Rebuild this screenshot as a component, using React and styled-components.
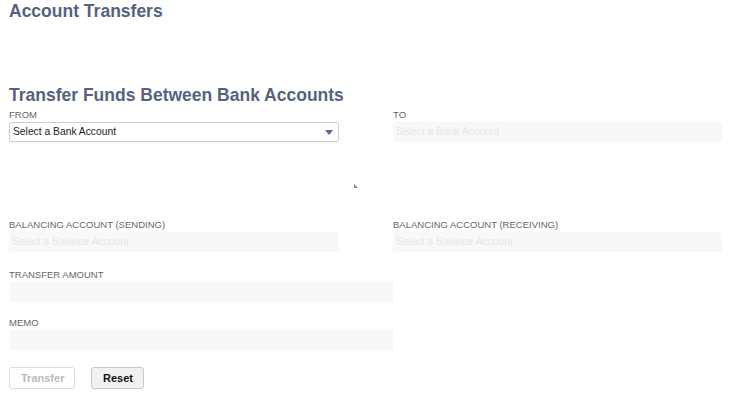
import React from 'react';
import styled, { createGlobalStyle } from 'styled-components';

const GlobalStyle = createGlobalStyle`
  html, body {
    margin: 0;
    padding: 0;
    background: #ffffff;
  }
  body {
    font-family: "Liberation Sans", Arial, sans-serif;
  }
`;

const Page = styled.div`
  position: relative;
  width: 733px;
  height: 401px;
  padding: 1px 9px 0;
  box-sizing: border-box;
  overflow: hidden;
`;

const PageTitle = styled.h1`
  margin: 0;
  font-size: 17.5px;
  line-height: 20px;
  font-weight: bold;
  color: #56627f;
`;

const SectionTitle = styled.h2`
  margin: 64px 0 4px;
  font-size: 17.5px;
  line-height: 20px;
  font-weight: bold;
  color: #56627f;
`;

const Row = styled.div`
  display: grid;
  grid-template-columns: ${(p) => (p.$wide ? '384px' : '330px 329px')};
  column-gap: 54px;
  margin-bottom: ${(p) => p.$after || 17}px;
`;

const Field = styled.div`
  display: flex;
  flex-direction: column;
`;

const Label = styled.label`
  font-size: 9.5px;
  line-height: 11px;
  color: #666666;
  margin-bottom: 2px;
  white-space: nowrap;
`;

const SelectBox = styled.div`
  position: relative;
  height: 20px;
  box-sizing: border-box;
  border: 1px solid #cfcfcf;
  border-radius: 2px;
  background: #ffffff;
  box-shadow: 0 1px 1px rgba(0, 0, 0, 0.04);
  font-size: 10.3px;
  line-height: 18px;
  padding-left: 3px;
  color: #222222;
`;

const Arrow = styled.span`
  position: absolute;
  right: 5px;
  top: 7px;
  width: 0;
  height: 0;
  border-left: 4px solid transparent;
  border-right: 4px solid transparent;
  border-top: 5px solid #5b6a8f;
`;

const Disabled = styled.div`
  height: 20px;
  box-sizing: border-box;
  border-radius: 2px;
  background: #f8f8f8;
  font-size: 10.3px;
  line-height: 20px;
  padding-left: 3px;
  color: #e6e6e6;
  white-space: nowrap;
`;

const Buttons = styled.div`
  display: flex;
  gap: 16px;
`;

const Button = styled.button`
  height: 22px;
  box-sizing: border-box;
  padding: 0 11px;
  border-radius: 3px;
  font-family: "Liberation Sans", Arial, sans-serif;
  font-size: 11px;
  font-weight: bold;
  border: 1px solid ${(p) => (p.disabled ? '#dddddd' : '#c8c8c8')};
  background: ${(p) => (p.disabled ? '#ffffff' : '#f1f1f1')};
  color: ${(p) => (p.disabled ? '#bbbbbb' : '#111111')};
  width: ${(p) => p.$w}px;
`;

const Pointer = styled.span`
  position: absolute;
  left: 354px;
  top: 184px;
  width: 0;
  height: 0;
  border-left: 4px solid #5a6585;
  border-top: 4px solid transparent;
  opacity: 0.8;
`;

export default function App() {
  return (
    <Page>
      <GlobalStyle />
      <PageTitle>Account Transfers</PageTitle>
      <SectionTitle>Transfer Funds Between Bank Accounts</SectionTitle>
      <Row $after={77}>
        <Field>
          <Label>FROM</Label>
          <SelectBox>
            Select a Bank Account
            <Arrow />
          </SelectBox>
        </Field>
        <Field>
          <Label>TO</Label>
          <Disabled>Select a Bank Account</Disabled>
        </Field>
      </Row>
      <Row $after={17}>
        <Field>
          <Label>BALANCING ACCOUNT (SENDING)</Label>
          <Disabled>Select a Balance Account</Disabled>
        </Field>
        <Field>
          <Label>BALANCING ACCOUNT (RECEIVING)</Label>
          <Disabled>Select a Balance Account</Disabled>
        </Field>
      </Row>
      <Row $wide $after={15}>
        <Field>
          <Label>TRANSFER AMOUNT</Label>
          <Disabled />
        </Field>
      </Row>
      <Row $wide $after={17}>
        <Field>
          <Label>MEMO</Label>
          <Disabled />
        </Field>
      </Row>
      <Buttons>
        <Button disabled $w={66}>Transfer</Button>
        <Button $w={53}>Reset</Button>
      </Buttons>
      <Pointer />
    </Page>
  );
}
